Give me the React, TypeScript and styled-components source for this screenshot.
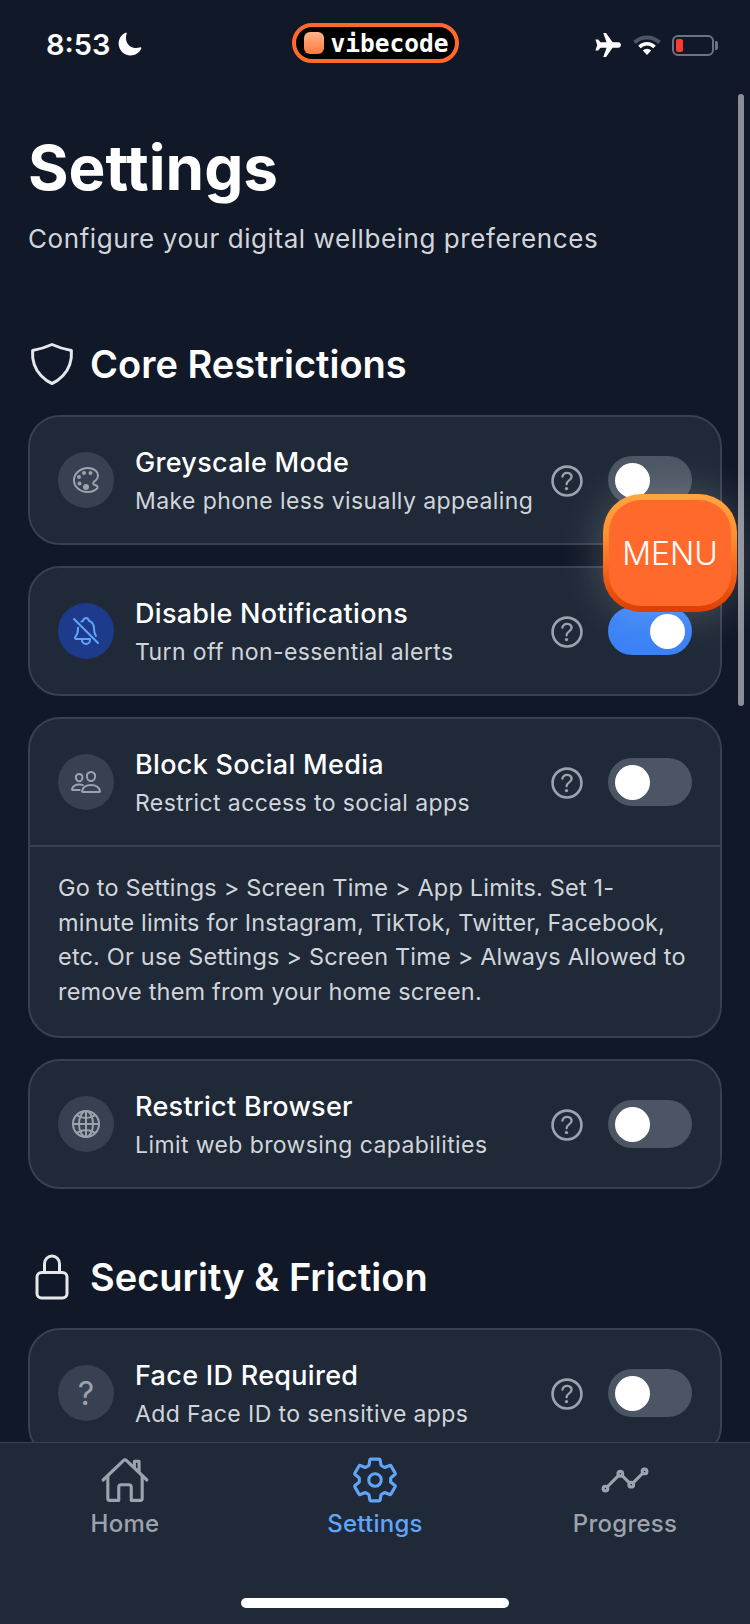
import React from "react"
import styled, { createGlobalStyle } from "styled-components"
import {
    IoAnalyticsOutline,
    IoColorPaletteOutline,
    IoGlobeOutline,
    IoHelpCircleOutline,
    IoHomeOutline,
    IoLockClosedOutline,
    IoMoon,
    IoNotificationsOffOutline,
    IoPeopleOutline,
    IoSettingsOutline,
    IoShieldOutline,
} from "react-icons/io5"

const GlobalStyle = createGlobalStyle`
    html, body {
        margin: 0;
        padding: 0;
        background: #111827;
    }
    * {
        box-sizing: border-box;
    }
`

const Screen = styled.div`
    position: relative;
    width: 750px;
    height: 1624px;
    overflow: hidden;
    display: flex;
    flex-direction: column;
    background: #111827;
    font-family: Inter, "Noto Sans", sans-serif;
    color: #fff;
`

const StatusBar = styled.div`
    flex: none;
    height: 88px;
    padding: 23px 32px 0;
    display: grid;
    grid-template-columns: 1fr auto 1fr;
    align-items: start;
`

const TimeGroup = styled.div`
    display: flex;
    align-items: center;
    gap: 6px;
    height: 42px;
    padding-left: 14px;
    font-size: 29px;
    font-weight: 600;
`

const Pill = styled.div`
    display: flex;
    align-items: center;
    gap: 7px;
    width: 167px;
    height: 40px;
    padding-left: 8px;
    background: #000;
    border: 4px solid #ff6a2c;
    border-radius: 20px;
    font-family: "DejaVu Sans Mono", monospace;
    font-weight: 700;
    font-size: 24.5px;
`

const PillLogo = styled.div`
    width: 20px;
    height: 22px;
    border-radius: 6px;
    background: linear-gradient(180deg, #ffb48a, #ff7a3c);
`

const StatusIcons = styled.div`
    display: flex;
    align-items: center;
    justify-content: flex-end;
    gap: 11px;
    height: 44px;
`

const Battery = styled.div`
    position: relative;
    width: 42px;
    height: 21px;
    padding: 2px;
    border: 2px solid #6b7280;
    border-radius: 6px;
    margin-right: 4px;

    &::after {
        content: "";
        position: absolute;
        right: -6px;
        top: 4px;
        width: 3px;
        height: 9px;
        border-radius: 0 2px 2px 0;
        background: #6b7280;
    }
`

const BatteryLevel = styled.div`
    width: 7px;
    height: 100%;
    border-radius: 2px;
    background: #ff3b30;
`

const Content = styled.div`
    flex: 1;
    min-height: 0;
    overflow: hidden;
    padding: 44px 28px 0;
`

const PageTitle = styled.h1`
    margin: 0;
    font-size: 62px;
    line-height: 72px;
    font-weight: 700;
`

const PageSubtitle = styled.p`
    margin: 17px 0 0;
    font-size: 26px;
    line-height: 36px;
    letter-spacing: 0.57px;
    color: #d1d5db;
`

const SectionHeading = styled.div<{ $top: number }>`
    display: flex;
    align-items: center;
    gap: 14px;
    font-size: 38px;
    line-height: 48px;
    font-weight: 600;
    margin-top: ${p => p.$top}px;
    margin-bottom: 27px;

    svg {
        flex: none;
        color: #e5e7eb;
    }
`

const CardList = styled.div`
    display: flex;
    flex-direction: column;
    gap: 21px;
`

const Card = styled.div`
    background: #1f2937;
    border: 2px solid #374151;
    border-radius: 32px;
    overflow: hidden;
`

const CardRow = styled.div`
    display: flex;
    align-items: center;
    height: 126px;
    padding: 0 28px;
`

const IconCircle = styled.div<{ $active?: boolean }>`
    flex: none;
    width: 56px;
    height: 56px;
    border-radius: 50%;
    display: flex;
    align-items: center;
    justify-content: center;
    background: ${p => (p.$active ? "#1e3a8a" : "#374151")};
    color: ${p => (p.$active ? "#60a5fa" : "#9ca3af")};
    font-size: 32px;
`

const CardText = styled.div`
    flex: 1;
    min-width: 0;
    margin-left: 21px;
    padding-top: 3px;
`

const CardTitle = styled.div`
    font-size: 27px;
    line-height: 36px;
    font-weight: 500;
    letter-spacing: 0.3px;
`

const CardDescription = styled.div`
    margin-top: 2px;
    font-size: 23px;
    line-height: 36px;
    letter-spacing: 0.4px;
    color: #d1d5db;
`

const HelpButton = styled.div`
    flex: none;
    display: flex;
    margin: 2px 20px 0 0;
    color: #9ca3af;
`

const Toggle = styled.div<{ $on?: boolean }>`
    flex: none;
    display: flex;
    justify-content: ${p => (p.$on ? "flex-end" : "flex-start")};
    align-items: center;
    width: 84px;
    height: 48px;
    padding: 0 7px;
    border-radius: 24px;
    background: ${p => (p.$on ? "#3b82f6" : "#4b5563")};
`

const Thumb = styled.div`
    width: 35px;
    height: 35px;
    border-radius: 50%;
    background: #fff;
`

const CardNote = styled.div`
    border-top: 2px solid #374151;
    padding: 24px 32px 27px 28px;
    font-size: 23.5px;
    line-height: 34.5px;
    letter-spacing: 0.18px;
    color: #d1d5db;
`

const TabBar = styled.div`
    flex: none;
    height: 182px;
    display: flex;
    justify-content: space-around;
    padding: 12px 0 0;
    background: #1f2937;
    border-top: 1px solid #374151;
`

const Tab = styled.div<{ $active?: boolean }>`
    width: 250px;
    display: flex;
    flex-direction: column;
    align-items: center;
    gap: 3px;
    font-size: 24px;
    line-height: 32px;
    font-weight: 500;
    letter-spacing: 0.25px;
    color: ${p => (p.$active ? "#60a5fa" : "#9ca3af")};
`

const HomeIndicator = styled.div`
    position: absolute;
    left: 241px;
    bottom: 16px;
    width: 268px;
    height: 10px;
    border-radius: 5px;
    background: #fff;
`

const ScrollThumb = styled.div`
    position: absolute;
    left: 738px;
    top: 94px;
    width: 6px;
    height: 612px;
    border-radius: 3px;
    background: #8b8e98;
`

const MenuButton = styled.div`
    position: absolute;
    left: 603px;
    top: 494px;
    width: 134px;
    height: 118px;
    display: flex;
    align-items: center;
    justify-content: center;
    border: 6px solid transparent;
    border-radius: 38px;
    background: linear-gradient(#ff6a2c, #ff6a2c) padding-box,
        linear-gradient(180deg, #ffa640, #ff8f32 35%, #f4641c 65%, #de3e00) border-box;
    box-shadow: 0 0 46px rgba(255, 255, 255, 0.22);
    font-size: 32px;
    font-weight: 300;
`

const sections = [
    {
        title: "Core Restrictions",
        top: 83,
        icon: <IoShieldOutline size={48} />,
        items: [
            {
                title: "Greyscale Mode",
                description: "Make phone less visually appealing",
                icon: <IoColorPaletteOutline />,
            },
            {
                title: "Disable Notifications",
                description: "Turn off non-essential alerts",
                icon: <IoNotificationsOffOutline />,
                on: true,
            },
            {
                title: "Block Social Media",
                description: "Restrict access to social apps",
                icon: <IoPeopleOutline />,
                note: "Go to Settings > Screen Time > App Limits. Set 1-minute limits for Instagram, TikTok, Twitter, Facebook, etc. Or use Settings > Screen Time > Always Allowed to remove them from your home screen.",
            },
            {
                title: "Restrict Browser",
                description: "Limit web browsing capabilities",
                icon: <IoGlobeOutline />,
            },
        ],
    },
    {
        title: "Security & Friction",
        top: 64,
        icon: <IoLockClosedOutline size={48} />,
        items: [
            {
                title: "Face ID Required",
                description: "Add Face ID to sensitive apps",
                icon: <>?</>,
            },
        ],
    },
]

const App = () => {
    return (
        <Screen>
            <GlobalStyle />
            <StatusBar>
                <TimeGroup>
                    8:53 <IoMoon size={26} />
                </TimeGroup>
                <Pill>
                    <PillLogo />
                    vibecode
                </Pill>
                <StatusIcons>
                    <svg width="30" height="26" viewBox="0 0 30 28" fill="#fff">
                        <path d="M11 1h3l7 10h6c1.800 0 3 1.300 3 3s-1.200 3-3 3h-6l-7 10h-3l3.500-10H8l-2.500 3H2.500L4.500 14l-2-6h3L8 11h6.500z" />
                    </svg>
                    <svg width="28" height="20" viewBox="0 0 28 20" fill="none">
                        <path d="M1.500 7.500a18 18 0 0 1 25 0" stroke="#4b5563" strokeWidth="4" />
                        <path d="M6.500 12a10.500 10.500 0 0 1 15 0" stroke="#fff" strokeWidth="3.500" />
                        <path d="M14 20l-4.200-4.500a6 6 0 0 1 8.400 0z" fill="#fff" />
                    </svg>
                    <Battery>
                        <BatteryLevel />
                    </Battery>
                </StatusIcons>
            </StatusBar>
            <Content>
                <PageTitle>Settings</PageTitle>
                <PageSubtitle>Configure your digital wellbeing preferences</PageSubtitle>
                {sections.map(section => (
                    <div key={section.title}>
                        <SectionHeading $top={section.top}>
                            {section.icon}
                            {section.title}
                        </SectionHeading>
                        <CardList>
                            {section.items.map(item => (
                                <Card key={item.title}>
                                    <CardRow>
                                        <IconCircle $active={item.on}>{item.icon}</IconCircle>
                                        <CardText>
                                            <CardTitle>{item.title}</CardTitle>
                                            <CardDescription>{item.description}</CardDescription>
                                        </CardText>
                                        <HelpButton>
                                            <IoHelpCircleOutline size={42} />
                                        </HelpButton>
                                        <Toggle $on={item.on}>
                                            <Thumb />
                                        </Toggle>
                                    </CardRow>
                                    {item.note && <CardNote>{item.note}</CardNote>}
                                </Card>
                            ))}
                        </CardList>
                    </div>
                ))}
            </Content>
            <TabBar>
                <Tab>
                    <IoHomeOutline size={50} />
                    Home
                </Tab>
                <Tab $active>
                    <IoSettingsOutline size={50} />
                    Settings
                </Tab>
                <Tab>
                    <IoAnalyticsOutline size={50} />
                    Progress
                </Tab>
            </TabBar>
            <ScrollThumb />
            <MenuButton>MENU</MenuButton>
            <HomeIndicator />
        </Screen>
    )
}

export default App
